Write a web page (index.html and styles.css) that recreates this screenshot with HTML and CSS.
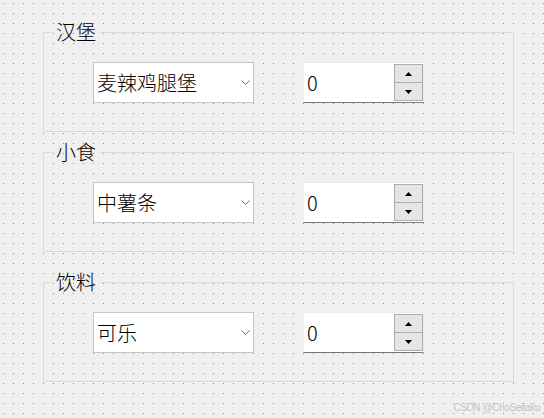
FILE: index.html
```html
<!DOCTYPE html>
<html lang="zh-CN">
<head>
<meta charset="utf-8">
<title>点餐</title>
<link rel="stylesheet" href="styles.css">
</head>
<body>
<div class="page">
  <fieldset class="group">
    <legend class="group-title">汉堡</legend>
    <div class="group-row">
      <div class="combo">
        <span class="combo-text">麦辣鸡腿堡</span>
        <svg class="chevron" width="9" height="5" viewBox="0 0 9 5"><polyline points="0.5,0.5 4.5,4.5 8.5,0.5" fill="none" stroke="#6a6a6a" stroke-width="1"/></svg>
      </div>
      <div class="spin">
        <span class="spin-value">0</span>
        <div class="spin-buttons">
          <div class="spin-btn"><svg width="7" height="4" viewBox="0 0 7 4"><polygon points="3.5,0 7,4 0,4" fill="#000"/></svg></div>
          <div class="spin-btn"><svg width="7" height="4" viewBox="0 0 7 4"><polygon points="0,0 7,0 3.5,4" fill="#000"/></svg></div>
        </div>
      </div>
    </div>
  </fieldset>

  <fieldset class="group group-second">
    <legend class="group-title">小食</legend>
    <div class="group-row">
      <div class="combo">
        <span class="combo-text">中薯条</span>
        <svg class="chevron" width="9" height="5" viewBox="0 0 9 5"><polyline points="0.5,0.5 4.5,4.5 8.5,0.5" fill="none" stroke="#6a6a6a" stroke-width="1"/></svg>
      </div>
      <div class="spin">
        <span class="spin-value">0</span>
        <div class="spin-buttons">
          <div class="spin-btn"><svg width="7" height="4" viewBox="0 0 7 4"><polygon points="3.5,0 7,4 0,4" fill="#000"/></svg></div>
          <div class="spin-btn"><svg width="7" height="4" viewBox="0 0 7 4"><polygon points="0,0 7,0 3.5,4" fill="#000"/></svg></div>
        </div>
      </div>
    </div>
  </fieldset>

  <fieldset class="group group-third">
    <legend class="group-title">饮料</legend>
    <div class="group-row">
      <div class="combo">
        <span class="combo-text">可乐</span>
        <svg class="chevron" width="9" height="5" viewBox="0 0 9 5"><polyline points="0.5,0.5 4.5,4.5 8.5,0.5" fill="none" stroke="#6a6a6a" stroke-width="1"/></svg>
      </div>
      <div class="spin">
        <span class="spin-value">0</span>
        <div class="spin-buttons">
          <div class="spin-btn"><svg width="7" height="4" viewBox="0 0 7 4"><polygon points="3.5,0 7,4 0,4" fill="#000"/></svg></div>
          <div class="spin-btn"><svg width="7" height="4" viewBox="0 0 7 4"><polygon points="0,0 7,0 3.5,4" fill="#000"/></svg></div>
        </div>
      </div>
    </div>
  </fieldset>
</div>
<div class="watermark">CSDN @ChoSeitaku</div>
</body>
</html>
```

FILE: styles.css
```css
html {
  height: 100%;
  background-color: #f0f0f0;
  background-image: conic-gradient(from 270deg at 1px 1px, #8f8f8f 90deg, transparent 0);
  background-size: 10px 10px;
  background-position: 3px 3px;
}

body {
  margin: 0;
  height: 100%;
  position: relative;
  font-family: "Noto Sans CJK SC", "Liberation Sans", sans-serif;
  font-weight: 300;
  color: #000;
}

.page {
  padding: 22px 0 0 43px;
}

.group {
  box-sizing: border-box;
  width: 471px;
  min-inline-size: 0;
  margin: 0;
  padding: 0;
  border: 1px solid #dadada;
}

.group-second {
  margin-top: 10px;
}

.group-third {
  margin-top: 20px;
}

.group-title {
  margin-left: 8px;
  padding: 0 4px;
  font-size: 20px;
  line-height: 20px;
}

.group-row {
  display: flex;
  gap: 49px;
  padding: 20px 0 28px 49px;
}

.combo {
  box-sizing: border-box;
  width: 161px;
  height: 41px;
  background: #fff;
  border: 1px solid #c6c6c6;
  display: flex;
  align-items: center;
  padding: 0 3px 0 3px;
}

.combo-text {
  flex: 1;
  font-size: 20px;
  line-height: 24px;
}

.chevron {
  display: block;
}

.spin {
  box-sizing: border-box;
  width: 121px;
  height: 41px;
  background: #fff;
  border: 1px solid #ececec;
  border-bottom-color: #7a7a7a;
  display: flex;
  align-items: center;
}

.spin-value {
  flex: 1;
  padding-left: 3px;
  font-size: 20px;
  line-height: 24px;
}

.spin-buttons {
  display: flex;
  flex-direction: column;
  align-self: flex-start;
  margin-top: 1px;
  width: 29px;
}

.spin-btn {
  box-sizing: border-box;
  height: 19px;
  border: 1px solid #adadad;
  background: #e5e5e5;
  display: flex;
  align-items: center;
  justify-content: center;
}

.spin-btn + .spin-btn {
  margin-top: -1px;
}

.spin-btn svg {
  display: block;
}

.watermark {
  position: absolute;
  right: 4px;
  bottom: 5px;
  font-family: "Liberation Sans", sans-serif;
  font-weight: 400;
  font-size: 10px;
  letter-spacing: -0.4px;
  color: #c4c4c4;
}
```
